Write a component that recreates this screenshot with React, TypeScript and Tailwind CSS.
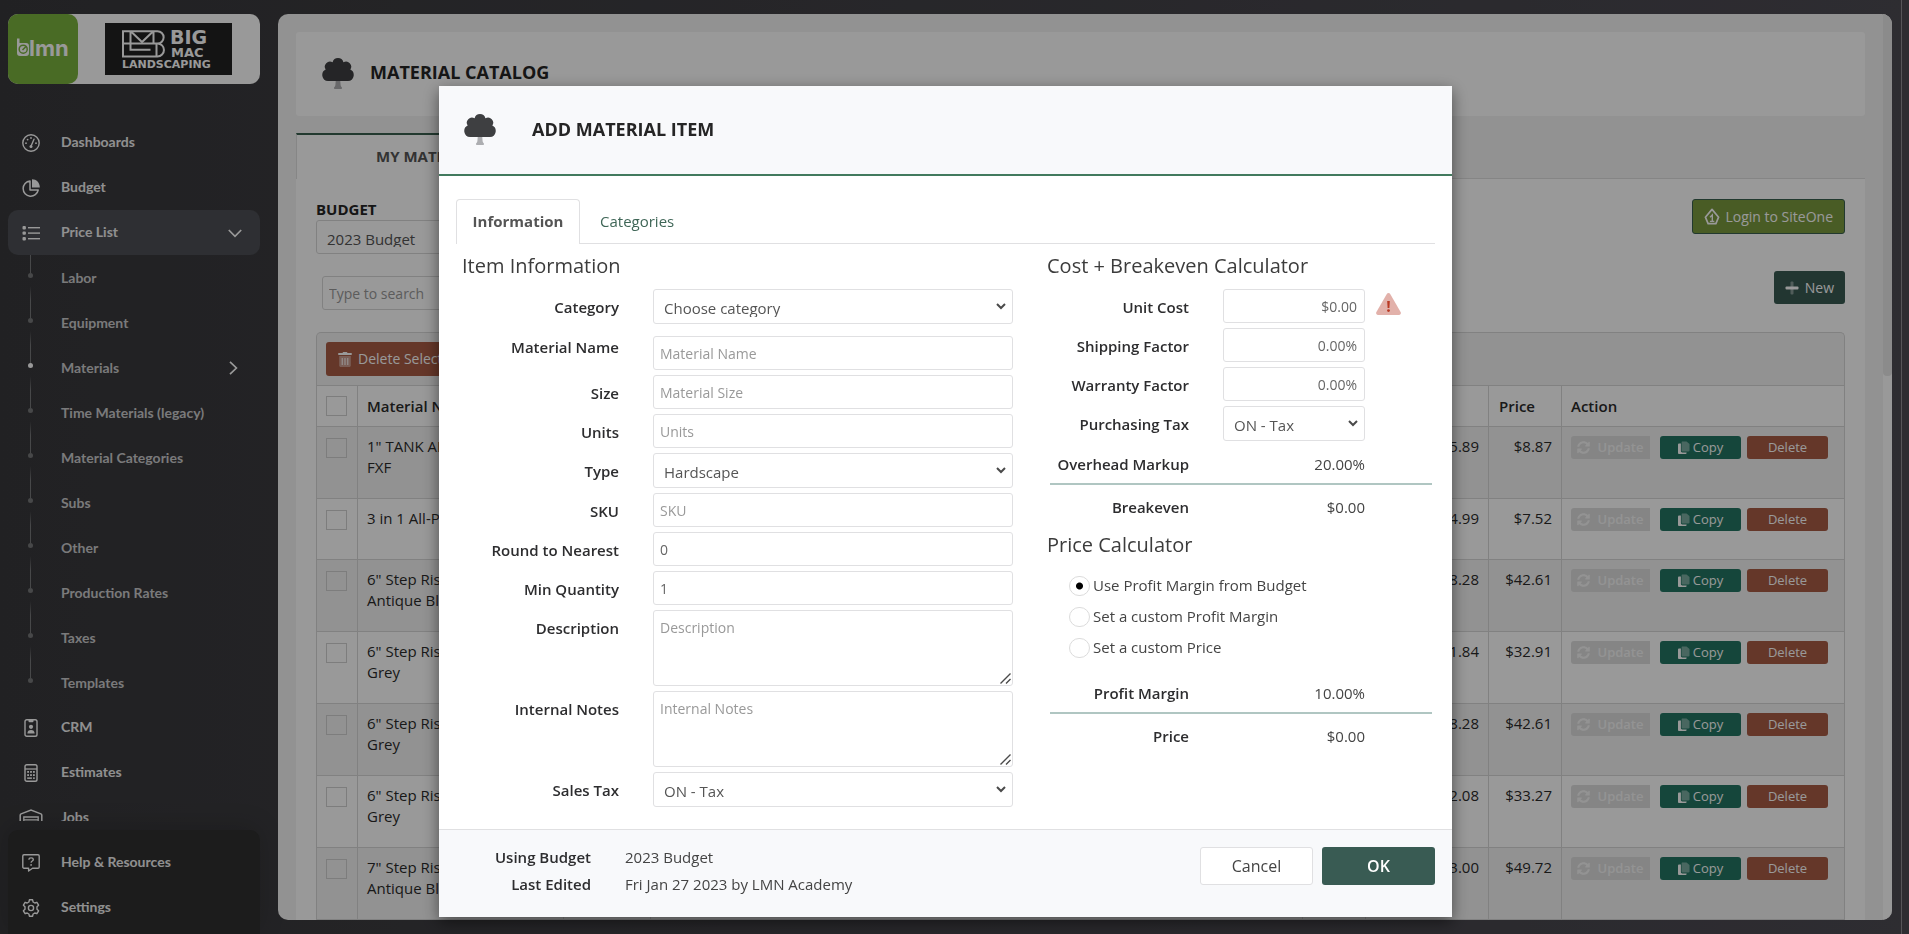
import { ReactNode } from 'react';
import { FaSyncAlt } from 'react-icons/fa';

interface Material {
  name: string;
  cost: string;
  price: string;
  short?: boolean;
}

const materials: Material[] = [
  { name: '1" TANK ADAPTER FXF', cost: '$5.89', price: '$8.87' },
  { name: '3 in 1 All-Purpose', cost: '$4.99', price: '$7.52', short: true },
  { name: '6" Step Riser Antique Black', cost: '$28.28', price: '$42.61' },
  { name: '6" Step Riser - 48" Grey', cost: '$21.84', price: '$32.91' },
  { name: '6" Step Riser - 60" Grey', cost: '$28.28', price: '$42.61' },
  { name: '6" Step Riser - 72" Grey', cost: '$22.08', price: '$33.27' },
  { name: '7" Step Riser Antique Black', cost: '$33.00', price: '$49.72' },
];

const subItems = [
  'Labor',
  'Equipment',
  'Materials',
  'Time Materials (legacy)',
  'Material Categories',
  'Subs',
  'Other',
  'Production Rates',
  'Taxes',
  'Templates',
];

/* Icons */

function GaugeIcon() {
  return (
    <svg viewBox="0 0 18 18" className="h-[18px] w-[18px]" fill="none" stroke="currentColor">
      <circle cx="9" cy="9" r="8.2" strokeWidth="1.4" />
      <path d="M9.3 11.5 12 5.2" strokeWidth="1.4" strokeLinecap="round" />
      <circle cx="9" cy="12.4" r="1.5" fill="currentColor" stroke="none" />
      <g fill="currentColor" stroke="none">
        <circle cx="4" cy="9.2" r="0.9" />
        <circle cx="5.6" cy="5.6" r="0.9" />
        <circle cx="9" cy="4" r="0.9" />
        <circle cx="14" cy="9.2" r="0.9" />
      </g>
    </svg>
  );
}

function PieIcon() {
  return (
    <svg viewBox="0 0 18 18" className="h-[18px] w-[18px]" fill="none" stroke="currentColor">
      <path d="M8 2a7.6 7.6 0 1 0 8.2 9H8z" strokeWidth="1.5" strokeLinejoin="round" />
      <path d="M10 0.3c4.4 0 7.8 3.4 7.8 8.2H10z" fill="currentColor" stroke="none" />
    </svg>
  );
}

function ListIcon() {
  return (
    <svg viewBox="0 0 18 18" className="h-[18px] w-[18px]" fill="currentColor">
      <rect x="0.5" y="2" width="3.4" height="3.4" rx="1" />
      <rect x="0.5" y="7.4" width="3.4" height="3.4" rx="1" />
      <rect x="0.5" y="13" width="3.4" height="3.4" rx="1" />
      <rect x="6" y="3" width="12" height="1.4" />
      <rect x="6" y="8.4" width="12" height="1.4" />
      <rect x="6" y="14" width="12" height="1.4" />
    </svg>
  );
}

function BadgeIcon() {
  return (
    <svg viewBox="0 0 14 18" className="h-[18px] w-[14px]" fill="none" stroke="currentColor">
      <rect x="1" y="0.8" width="12" height="16.4" rx="1.8" strokeWidth="1.4" />
      <path d="M4.5 1h5v1.2a1 1 0 0 1-1 1h-3a1 1 0 0 1-1-1z" fill="currentColor" stroke="none" />
      <circle cx="7" cy="7.8" r="2.1" fill="currentColor" stroke="none" />
      <path d="M3.4 14.4c0-2.2 1.4-3.4 3.6-3.4s3.6 1.2 3.6 3.4z" fill="currentColor" stroke="none" />
    </svg>
  );
}

function CalculatorIcon() {
  return (
    <svg viewBox="0 0 14 18" className="h-[18px] w-[14px]" fill="none" stroke="currentColor">
      <rect x="1" y="0.8" width="12" height="16.4" rx="1.8" strokeWidth="1.4" />
      <path d="M1 5h12" strokeWidth="1.3" />
      <g fill="currentColor" stroke="none">
        <rect x="3.2" y="7" width="1.8" height="1.8" />
        <rect x="6.1" y="7" width="1.8" height="1.8" />
        <rect x="9" y="7" width="1.8" height="1.8" />
        <rect x="3.2" y="10.2" width="1.8" height="1.8" />
        <rect x="6.1" y="10.2" width="1.8" height="1.8" />
        <rect x="9" y="10.2" width="1.8" height="1.8" />
        <rect x="3.2" y="13.4" width="4.7" height="1.5" />
        <rect x="9" y="13.4" width="1.8" height="1.5" />
      </g>
    </svg>
  );
}

function WarehouseIcon() {
  return (
    <svg viewBox="0 0 24 18" className="h-[18px] w-6" fill="none" stroke="currentColor">
      <path d="M1.2 17V6.2c0-.6.3-1 .9-1.3L12 1l9.9 3.9c.6.3.9.7.9 1.3V17" strokeWidth="1.5" />
      <path d="M4.8 17V8h14.4v9M5 10.8h14M5 13.8h14" strokeWidth="1.3" />
    </svg>
  );
}

function HelpIcon() {
  return (
    <svg viewBox="0 0 18 18" className="h-[18px] w-[18px]" fill="none" stroke="currentColor">
      <path
        d="M2 .8h14c.7 0 1.2.5 1.2 1.2v11c0 .7-.5 1.2-1.2 1.2h-5.5L6.6 17v-2.8H2c-.7 0-1.2-.5-1.2-1.2V2C.8 1.3 1.3.8 2 .8z"
        strokeWidth="1.4"
        strokeLinejoin="round"
      />
      <path d="M6.9 5.700c0-1.1.9-1.8 2.2-1.8s2.2.7 2.2 1.8c0 1.3-2.2 1.4-2.2 3" strokeWidth="1.3" />
      <circle cx="9.1" cy="10.9" r="0.9" fill="currentColor" stroke="none" />
    </svg>
  );
}

function GearIcon() {
  return (
    <svg viewBox="0 0 18 18" className="h-[18px] w-[18px]" fill="none" stroke="currentColor">
      <path
        d="M7.4 .8h3.2l.5 2.200 1.700 1 2.100-.7 1.700 2.900-1.600 1.500v2.600l1.600 1.500-1.700 2.900-2.100-.7-1.700 1-.5 2.200H7.400l-.5-2.200-1.700-1-2.100.7-1.700-2.900L3 10.300V7.700L1.400 6.200l1.700-2.900 2.100.7 1.700-1z"
        strokeWidth="1.4"
        strokeLinejoin="round"
      />
      <circle cx="9" cy="9" r="2.6" strokeWidth="1.4" />
    </svg>
  );
}

function TreeIcon() {
  return (
    <svg viewBox="0 0 32 32" className="h-8 w-8 shrink-0">
      <path d="M13.8 23h4.4l.4 5c.1 1.3.8 1.9 1.3 2.6.3.5.1 1.4-.7 1.4h-6.4c-.8 0-1-.9-.7-1.4.5-.7 1.2-1.3 1.3-2.6z" fill="#adaeb1" />
      <path
        d="M6 24a6 6 0 0 1-2.3-11.4A5.2 5.2 0 0 1 10.6 5.2a5.6 5.6 0 0 1 10.8 0 5.2 5.2 0 0 1 6.9 7.4A6 6 0 0 1 26 24z"
        fill="#3e3f41"
      />
    </svg>
  );
}

function DropIcon() {
  return (
    <svg viewBox="0 0 16 17" className="h-[17px] w-4" fill="none" stroke="currentColor">
      <path d="M8 1.4 1.4 9.2l2.7 6.4h7.8l2.7-6.4z" strokeWidth="1.7" strokeLinejoin="round" />
      <path d="M6 9.2 8.3 7v6.2M5.9 13.4h4.4" strokeWidth="1.4" />
    </svg>
  );
}

function PlusIcon() {
  return (
    <svg viewBox="0 0 14 14" className="h-[14px] w-[14px]" fill="currentColor">
      <rect x="5.5" y="0.5" width="3" height="13" rx="1" opacity="0.4" />
      <rect x="0.5" y="5.5" width="13" height="3" rx="1" />
    </svg>
  );
}

function TrashIcon() {
  return (
    <svg viewBox="0 0 14 15" className="h-[15px] w-[14px]" fill="currentColor">
      <path d="M1.2 4h11.6v9.5c0 .8-.6 1.5-1.5 1.5H2.7c-.9 0-1.5-.7-1.500-1.500z" opacity="0.4" />
      <path d="M.6 1h3.8l.8-1h3.600l.8 1h3.800c.6 0 .6 2 0 2H.6C0 3 0 1 .6 1z" />
      <path d="M3.7 6h1v7h-1zM6.5 6h1v7h-1zM9.3 6h1v7h-1z" />
    </svg>
  );
}

function CopyIcon() {
  return (
    <svg viewBox="0 0 12 13" className="h-[13px] w-3" fill="currentColor">
      <path d="M4 .5h4.500L11.500 3v6.500c0 .5-.4.900-.9.900H4.500c-.5 0-.9-.4-.9-.9V1z" opacity="0.4" />
      <path d="M.9 2.500h2V10c0 .8.6 1.400 1.400 1.400h4.300v.6c0 .5-.4.900-.9.900H.9A.9.900 0 0 1 0 12V3.400c0-.5.400-.9.900-.9z" />
    </svg>
  );
}

function WarningIcon() {
  return (
    <svg viewBox="0 0 25 22" className="h-[22px] w-[25px]">
      <path d="M10.8 1a2 2 0 0 1 3.4 0l10.4 18a2 2 0 0 1-1.7 3H2.1a2 2 0 0 1-1.7-3z" fill="#e2b1aa" />
      <path d="M11.2 8h2.6l-.4 7h-1.8z" fill="#b93a24" />
      <circle cx="12.5" cy="17.6" r="1.4" fill="#b93a24" />
    </svg>
  );
}

function Chevron({ right }: { right?: boolean }) {
  return (
    <svg viewBox="0 0 14 14" className="ml-auto h-[14px] w-[14px] text-white" fill="none" stroke="currentColor" strokeWidth="1.7">
      {right ? <path d="M4 .8 10.400 7 4 13.200" /> : <path d="M.8 4 7 10.400 13.200 4" />}
    </svg>
  );
}

/* Sidebar */

function NavItem({ icon, label, active }: { icon: ReactNode; label: string; active?: boolean }) {
  return (
    <a
      href="#"
      className={`flex h-[45px] shrink-0 items-center rounded-[10px] pr-[18px] text-[#f0f0f0] ${active ? 'bg-[#4d4f55]' : ''}`}
    >
      <span className="flex w-[46px] shrink-0 justify-center text-white">{icon}</span>
      <span className="pb-px pl-[7px]">{label}</span>
      {active && <Chevron />}
    </a>
  );
}

function SubNav() {
  return (
    <ul className="shrink-0">
      {subItems.map((item) => (
        <li key={item}>
          <a href="#" className="flex h-[45px] items-stretch pr-5 text-[#cbcbcd]">
            <span className="flex w-[45px] shrink-0 flex-col items-center">
              <span className="h-[18px] w-px bg-[#77787a]" />
              <span className={`h-[5px] w-[5px] rounded-full ${item === 'Materials' ? 'bg-white' : 'bg-[#77787a]'}`} />
              {item !== 'Templates' && (
                <span className="mt-2 w-px flex-1 bg-linear-to-b from-transparent to-[#77787a]" />
              )}
            </span>
            <span className="flex flex-1 items-center pl-2 pt-px">
              {item}
              {item === 'Materials' && <Chevron right />}
            </span>
          </a>
        </li>
      ))}
    </ul>
  );
}

function Logos() {
  return (
    <div className="flex h-[70px] shrink-0 rounded-[10px] bg-white">
      <div className="flex w-[70px] items-center justify-center rounded-[10px] bg-[#7bb23f] text-white">
        <svg viewBox="0 -6 58 36" className="h-9 w-[58px]">
          <path d="M3 1.500h2.500V6H12c2 0 3 1 3 3v7c0 2-1 3-3 3H6c-2 0-3-1-3-3z" fill="#fff" />
          <circle cx="9.200" cy="12.200" r="4" fill="none" stroke="#7bb23f" strokeWidth="1.5" />
          <path d="m8.500 13 3.500-3.600" stroke="#7bb23f" strokeWidth="1.5" />
          <text x="15" y="19" fill="#fff" fontSize="22" fontWeight="700" fontFamily="Inter, sans-serif">
            lmn
          </text>
        </svg>
      </div>
      <div className="flex flex-1 items-center justify-center pr-[2px]">
        <svg viewBox="0 0 127 52" className="h-[52px] w-[127px] bg-[#222222]">
          <g fill="none" stroke="#fff" strokeWidth="2">
            <path d="M18 8.2h34.500a6 6 0 0 1 0 12.300H18zM18 20.500h34.500a6.300 6.300 0 0 1 0 12.900H18z" />
            <path d="M25.500 8.200v12.300M26 8.500l11 10.500L48 8.500M48.500 8.200v12.300M25.500 20.500v6.200h20M51.500 20.500v12.900M18 8.200v25.200" />
          </g>
          <g fill="#fff" fontFamily="'DejaVu Sans', sans-serif" fontWeight="700">
            <text x="65" y="21" fontSize="19">BIG</text>
            <text x="66" y="34" fontSize="13">MAC</text>
            <text x="17" y="45" fontSize="11">LANDSCAPING</text>
          </g>
        </svg>
      </div>
    </div>
  );
}

function Sidebar() {
  return (
    <aside className="flex w-[278px] shrink-0 flex-col pl-2 pr-[18px] pt-[14px] font-[Lato,sans-serif] text-sm font-bold">
      <Logos />
      <nav className="mt-9 flex min-h-0 flex-1 flex-col overflow-hidden">
        <NavItem icon={<GaugeIcon />} label="Dashboards" />
        <NavItem icon={<PieIcon />} label="Budget" />
        <NavItem icon={<ListIcon />} label="Price List" active />
        <SubNav />
        <NavItem icon={<BadgeIcon />} label="CRM" />
        <NavItem icon={<CalculatorIcon />} label="Estimates" />
        <NavItem icon={<WarehouseIcon />} label="Jobs" />
      </nav>
      <div className="mt-[9px] shrink-0 rounded-t-[10px] bg-[#2f2f2f] pb-1 pt-[10px] shadow-[0_-4px_24px_rgba(0,0,0,0.15)]">
        <NavItem icon={<HelpIcon />} label="Help & Resources" />
        <NavItem icon={<GearIcon />} label="Settings" />
      </div>
    </aside>
  );
}

/* Catalog page */

function Checkbox({ label }: { label: string }) {
  return (
    <input
      type="checkbox"
      aria-label={label}
      className="block h-5 w-[21px] appearance-none border border-[#d0d0d0] bg-transparent"
    />
  );
}

function MaterialTable() {
  return (
    <div>
      <div className="h-[53px] rounded-t-[5px] border border-b-0 border-[#d8d8d8] bg-[#f4f4f4] px-[9px] py-[9px]">
        <button className="flex h-[34px] items-center gap-[6px] rounded-[3px] bg-[#a95c45] px-3 text-sm text-white">
          <TrashIcon />
          Delete Selected
        </button>
      </div>
      <table className="w-full table-fixed border-collapse text-left text-[15px] leading-[21px] text-[#2b2b2b]">
        <colgroup>
          <col className="w-[41px]" />
          <col className="w-[206px]" />
          <col className="w-[87px]" />
          <col />
          <col className="w-[63px]" />
          <col className="w-[123px]" />
          <col className="w-[73px]" />
          <col className="w-[283px]" />
        </colgroup>
        <thead>
          <tr className="h-[41px] bg-white">
            <th className="border border-[#d8d8d8] px-[9px]"><Checkbox label="Select all materials" /></th>
            <th className="truncate border border-[#d8d8d8] px-[9px] font-semibold">Material Name</th>
            <th className="border border-[#d8d8d8]" />
            <th className="border border-[#d8d8d8]" />
            <th className="border border-[#d8d8d8]" />
            <th className="border border-[#d8d8d8]" />
            <th className="border border-[#d8d8d8] px-[10px] font-semibold">Price</th>
            <th className="border border-[#d8d8d8] px-[9px] font-semibold">Action</th>
          </tr>
        </thead>
        <tbody>
          {materials.map((m, i) => (
            <tr key={i} className={`align-top odd:bg-[#f4f4f4] even:bg-white ${m.short ? 'h-[61px]' : 'h-[72px]'}`}>
              <td className="border border-[#d8d8d8] px-[9px] pt-[11px]"><Checkbox label={`Select ${m.name}`} /></td>
              <td className="border border-[#d8d8d8] px-[9px] pt-[9px]">
                <div className={m.short ? '' : 'w-[130px]'}>{m.name}</div>
              </td>
              <td className="border border-[#d8d8d8]" />
              <td className="border border-[#d8d8d8]" />
              <td className="border border-[#d8d8d8]" />
              <td className="border border-[#d8d8d8] px-[9px] pt-[9px] text-right">{m.cost}</td>
              <td className="border border-[#d8d8d8] px-[9px] pt-[9px] text-right">{m.price}</td>
              <td className="border border-[#d8d8d8] px-[9px] pt-[9px]">
                <div className="flex text-[13px] text-white">
                  <button disabled className="flex h-[23px] w-[79px] items-center justify-center gap-[7px] rounded-l-[3px] bg-[#dedede] pb-px font-semibold text-[#f6f6f6]">
                    <FaSyncAlt size={13} />
                    Update
                  </button>
                  <button className="ml-[10px] flex h-[23px] w-[81px] items-center justify-center gap-[3px] rounded-[3px] bg-[#237663] pb-px">
                    <CopyIcon />
                    Copy
                  </button>
                  <button className="ml-[6px] h-[23px] w-[81px] rounded-[3px] bg-[#a95c45] pb-px">Delete</button>
                </div>
              </td>
            </tr>
          ))}
        </tbody>
      </table>
    </div>
  );
}

function Catalog() {
  return (
    <main className="my-[14px] flex min-w-0 flex-1 overflow-hidden rounded-[10px] bg-[#f3f3f3]">
      <div className="min-w-0 flex-1 px-[18px] pt-[18px]">
        <header className="flex h-[84px] items-center gap-4 rounded-[3px] bg-white pb-[3px] pl-[26px] text-[#252525]">
          <TreeIcon />
          <h1 className="text-[18px] font-bold">MATERIAL CATALOG</h1>
        </header>
        <div className="mt-[17px] flex h-[46px]">
          <button className="w-[270px] border-l border-t-2 border-l-[#e0e0e0] border-t-[#39604f] bg-white pb-[2px] text-[15px] font-bold text-[#555]">
            MY MATERIALS
          </button>
          <div className="flex-1 border-b border-[#dedede]" />
        </div>
        <section className="bg-white px-5 pb-5 pt-5">
          <div className="flex justify-between">
            <div className="w-[400px]">
              <label htmlFor="budget" className="block text-[15px] font-bold leading-[21px] text-[#252525]">
                BUDGET
              </label>
              <select
                id="budget"
                className="h-[34px] w-full rounded-[3px] border border-[#d8d8d8] bg-white pb-[6px] pl-[6px] pt-[7px] text-[15px] text-[#555]"
              >
                <option>2023 Budget</option>
              </select>
            </div>
            <button className="flex h-[35px] items-center gap-[5px] rounded-[3px] border border-[#39604f] bg-[#7a9a3f] px-[11px] text-sm text-white">
              <DropIcon />
              Login to SiteOne
            </button>
          </div>
          <div className="mt-[17px] flex justify-between">
            <input
              type="text"
              aria-label="Search"
              placeholder="Type to search"
              className="ml-[6px] mt-[5px] h-[34px] w-[300px] rounded-[3px] border border-[#d8d8d8] px-[6px] text-sm placeholder:text-[#999]"
            />
            <button className="flex h-[33px] items-center gap-[6px] rounded-[3px] bg-[#395b53] px-[11px] text-sm text-white">
              <PlusIcon />
              New
            </button>
          </div>
          <div className="mt-[22px]">
            <MaterialTable />
          </div>
        </section>
      </div>
      <div className="w-[9px] shrink-0 bg-white">
        <div className="h-2/5 rounded-b-[4px] bg-[#e8e8e8]" />
      </div>
    </main>
  );
}

/* Add material dialog */

function Field({ id, label, children }: { id: string; label: string; children: ReactNode }) {
  return (
    <div className="flex items-start">
      <label htmlFor={id} className="w-[157px] shrink-0 pt-[7px] text-right font-semibold leading-[22px]">
        {label}
      </label>
      <div className="ml-[34px] min-w-0 flex-1">{children}</div>
    </div>
  );
}

function TextField({ id, label, value, placeholder }: { id: string; label: string; value?: string; placeholder?: string }) {
  return (
    <Field id={id} label={label}>
      <input
        id={id}
        type="text"
        defaultValue={value}
        placeholder={placeholder}
        className={`block h-[34px] w-full rounded-[3px] border border-[#e0e0e2] bg-white px-[6px] text-sm text-[#666] placeholder:text-[#999] ${
          id === 'material-name' ? 'mt-[7px]' : ''
        }`}
      />
    </Field>
  );
}

function SelectBox({ id, option }: { id: string; option: string }) {
  return (
    <div className="relative">
      <select
        id={id}
        className="block h-[35px] w-full appearance-none rounded-[3px] border border-[#e0e0e2] bg-white pb-[6px] pl-[10px] pr-6 pt-[9px] text-[15px] leading-[18px] text-[#555]"
      >
        <option>{option}</option>
      </select>
      <svg
        viewBox="0 0 10 7"
        className="pointer-events-none absolute right-[7px] top-[14px] h-[7px] w-[10px]"
        fill="none"
        stroke="#4a4a4a"
        strokeWidth="2"
      >
        <path d="M1 1l4 4 4-4" />
      </svg>
    </div>
  );
}

function NotesField({ id, label }: { id: string; label: string }) {
  return (
    <Field id={id} label={label}>
      <div className="relative">
        <textarea
          id={id}
          placeholder={label}
          className="block h-[76px] w-full resize-none rounded-[3px] border border-[#e0e0e2] bg-white px-[6px] py-[7px] text-sm placeholder:text-[#999]"
        />
        <svg
          viewBox="0 0 11 11"
          className="pointer-events-none absolute bottom-[2px] right-[2px] h-[11px] w-[11px]"
          stroke="#4a4a4a"
          strokeWidth="1.4"
        >
          <path d="M.5 10.500l10-10M6 10.500l4.500-4.500" />
        </svg>
      </div>
    </Field>
  );
}

function CostField({ id, label, children }: { id: string; label: string; children: ReactNode }) {
  return (
    <div className="flex items-start">
      <label htmlFor={id} className="w-[142px] shrink-0 pt-[7px] text-right font-semibold leading-[22px]">
        {label}
      </label>
      <div className="ml-[34px] w-[142px]">{children}</div>
      {id === 'unit-cost' && (
        <span className="ml-[11px] mt-1">
          <WarningIcon />
        </span>
      )}
    </div>
  );
}

function CostInput({ id, value }: { id: string; value: string }) {
  return (
    <input
      id={id}
      type="text"
      defaultValue={value}
      className="block h-[34px] w-full rounded-[3px] border border-[#e0e0e2] bg-white px-[7px] text-right text-sm text-[#666]"
    />
  );
}

function Total({ label, value }: { label: string; value: string }) {
  return (
    <div className="flex leading-[22px]">
      <span className="w-[142px] text-right font-semibold">{label}</span>
      <span className="ml-[34px] w-[142px] text-right text-[#444]">{value}</span>
    </div>
  );
}

function RadioOption({ label, checked }: { label: string; checked?: boolean }) {
  return (
    <label className="flex items-start gap-[3px] text-[15px] leading-[19px] text-[#444]">
      <input
        type="radio"
        name="pricing"
        defaultChecked={checked}
        className="h-5 w-[21px] appearance-none rounded-full border border-[#dcdcdc] bg-white checked:bg-[radial-gradient(circle,#000_3px,transparent_4px)]"
      />
      {label}
    </label>
  );
}

function AddMaterialDialog() {
  return (
    <div role="dialog" aria-label="Add material item" className="w-full max-w-[1013px] bg-white text-[15px] text-[#2d2d2f] shadow-[0_5px_15px_rgba(0,0,0,0.5)]">
      <header className="flex h-[90px] items-center gap-9 border-b-2 border-[#427a5e] bg-[#f8f9fb] pb-[2px] pl-[25px] text-[#252525]">
        <TreeIcon />
        <h2 className="text-[18px] font-bold">ADD MATERIAL ITEM</h2>
      </header>

      <div className="px-[17px] pt-[23px]">
        <div role="tablist" className="flex h-[45px] border-b border-[#e0e0e2]">
          <button role="tab" className="-mb-px w-[124px] rounded-t-[4px] border border-b-0 border-[#e0e0e2] bg-white pb-px font-bold text-[#555]">
            Information
          </button>
          <button role="tab" className="ml-5 text-[#3f6657]">
            Categories
          </button>
        </div>

        <div className="flex justify-between pb-[22px]">
          <section className="w-[557px] pl-[6px]">
            <h3 className="pb-[9px] pt-2 text-xl leading-7 text-[#3c3c3c]">Item Information</h3>
            <div className="flex flex-col gap-[5px]">
              <Field id="category" label="Category">
                <SelectBox id="category" option="Choose category" />
              </Field>
              <TextField id="material-name" label="Material Name" placeholder="Material Name" />
              <TextField id="size" label="Size" placeholder="Material Size" />
              <TextField id="units" label="Units" placeholder="Units" />
              <Field id="type" label="Type">
                <SelectBox id="type" option="Hardscape" />
              </Field>
              <TextField id="sku" label="SKU" placeholder="SKU" />
              <TextField id="round" label="Round to Nearest" value="0" />
              <TextField id="min-quantity" label="Min Quantity" value="1" />
              <NotesField id="description" label="Description" />
              <NotesField id="internal-notes" label="Internal Notes" />
              <Field id="sales-tax" label="Sales Tax">
                <SelectBox id="sales-tax" option="ON - Tax" />
              </Field>
            </div>
          </section>

          <section className="w-[388px]">
            <h3 className="pb-[9px] pt-2 text-xl leading-7 text-[#3c3c3c]">Cost + Breakeven Calculator</h3>
            <div className="flex flex-col gap-[5px]">
              <CostField id="unit-cost" label="Unit Cost">
                <CostInput id="unit-cost" value="$0.00" />
              </CostField>
              <CostField id="shipping" label="Shipping Factor">
                <CostInput id="shipping" value="0.00%" />
              </CostField>
              <CostField id="warranty" label="Warranty Factor">
                <CostInput id="warranty" value="0.00%" />
              </CostField>
              <CostField id="purchasing-tax" label="Purchasing Tax">
                <SelectBox id="purchasing-tax" option="ON - Tax" />
              </CostField>
            </div>
            <div className="mr-[3px] ml-[3px] mt-3 border-b-2 border-[#b0c6c2] pb-2">
              <div className="-ml-[3px]">
                <Total label="Overhead Markup" value="20.00%" />
              </div>
            </div>
            <div className="mt-[11px]">
              <Total label="Breakeven" value="$0.00" />
            </div>
            <h3 className="mt-[13px] text-xl leading-7 text-[#3c3c3c]">Price Calculator</h3>
            <div className="mt-[17px] flex flex-col gap-[11px] pl-[22px]">
              <RadioOption label="Use Profit Margin from Budget" checked />
              <RadioOption label="Set a custom Profit Margin" />
              <RadioOption label="Set a custom Price" />
            </div>
            <div className="mr-[3px] ml-[3px] mt-6 border-b-2 border-[#b0c6c2] pb-2">
              <div className="-ml-[3px]">
                <Total label="Profit Margin" value="10.00%" />
              </div>
            </div>
            <div className="mt-[11px]">
              <Total label="Price" value="$0.00" />
            </div>
          </section>
        </div>
      </div>

      <footer className="flex h-[88px] items-start justify-between border-t border-[#e0e0e2] bg-[#f8f9fb] px-[17px] pt-4">
        <dl className="grid grid-cols-[135px_1fr] gap-x-[34px] gap-y-[5px] leading-[22px]">
          <dt className="text-right font-semibold">Using Budget</dt>
          <dd className="text-[#444]">2023 Budget</dd>
          <dt className="text-right font-semibold">Last Edited</dt>
          <dd className="text-[#444]">Fri Jan 27 2023 by LMN Academy</dd>
        </dl>
        <div className="flex gap-[9px] pt-px">
          <button className="h-[38px] w-[113px] rounded-[3px] border border-[#e0e0e2] bg-white text-base text-[#444]">
            Cancel
          </button>
          <button className="h-[38px] w-[113px] rounded-[3px] bg-[#395b53] text-base font-semibold text-white">OK</button>
        </div>
      </footer>
    </div>
  );
}

export default function App() {
  return (
    <div className="h-screen overflow-hidden font-['Open_Sans',sans-serif]">
      <div className="flex h-full bg-linear-to-r from-[#38383b] to-[#4d4b53]">
        <Sidebar />
        <Catalog />
        <div className="ml-[9px] w-2 shrink-0 border-l border-[#8f8e93]" />
      </div>
      <div className="fixed inset-0 z-10 flex items-start justify-center bg-black/40 pr-[18px] pt-[86px]">
        <AddMaterialDialog />
      </div>
    </div>
  );
}
